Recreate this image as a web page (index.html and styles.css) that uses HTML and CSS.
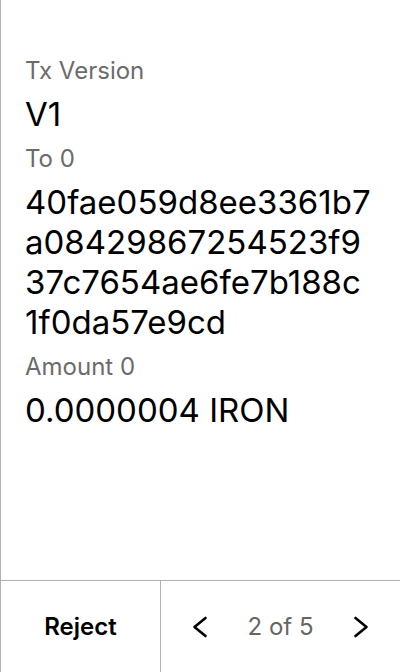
FILE: index.html
```html
<!DOCTYPE html>
<html>
<head>
<meta charset="utf-8">
<link rel="stylesheet" href="styles.css">
</head>
<body>
<div class="screen">
  <div class="content">
    <div class="field">
      <div class="label">Tx Version</div>
      <div class="value">V1</div>
    </div>
    <div class="field">
      <div class="label">To 0</div>
      <div class="value hex">40fae059d8ee3361b7a08429867254523f937c7654ae6fe7b188c1f0da57e9cd</div>
    </div>
    <div class="field">
      <div class="label">Amount 0</div>
      <div class="value">0.0000004 IRON</div>
    </div>
  </div>
  <div class="footer">
    <div class="reject">Reject</div>
    <div class="pager">
      <svg class="chev" width="16" height="24" viewBox="0 0 16 24"><path d="M13.5 3 L2.5 12 L13.5 21" fill="none" stroke="#000" stroke-width="2.6" stroke-linecap="round" stroke-linejoin="round"/></svg>
      <span class="count">2 of 5</span>
      <svg class="chev" width="16" height="24" viewBox="0 0 16 24"><path d="M2.5 3 L13.5 12 L2.5 21" fill="none" stroke="#000" stroke-width="2.6" stroke-linecap="round" stroke-linejoin="round"/></svg>
    </div>
  </div>
</div>
</body>
</html>
```
FILE: styles.css
```css
html, body {
  margin: 0;
  padding: 0;
  background: #fff;
}
body {
  font-family: Inter, "Noto Sans", sans-serif;
  color: #000;
}
.screen {
  width: 400px;
  height: 672px;
  box-sizing: border-box;
  border-left: 1px solid #b0b0b0;
  display: flex;
  flex-direction: column;
}
.content {
  flex: 1;
  padding: 56px 28px 0 24px;
  display: flex;
  flex-direction: column;
  gap: 10px;
}
.field {
  display: flex;
  flex-direction: column;
  gap: 9px;
}
.label {
  font-size: 24px;
  line-height: 29px;
  color: #6b6b6b;
}
.value {
  font-size: 33px;
  line-height: 40px;
}
.hex {
  word-break: break-all;
}
.footer {
  height: 91px;
  border-top: 1px solid #b0b0b0;
  display: flex;
}
.reject {
  width: 159px;
  border-right: 1px solid #b0b0b0;
  display: flex;
  align-items: center;
  justify-content: center;
  font-size: 24px;
  font-weight: 600;
}
.pager {
  flex: 1;
  display: flex;
  align-items: center;
  justify-content: space-between;
  padding: 0 31px;
}
.count {
  font-size: 24px;
  color: #666;
}
```
